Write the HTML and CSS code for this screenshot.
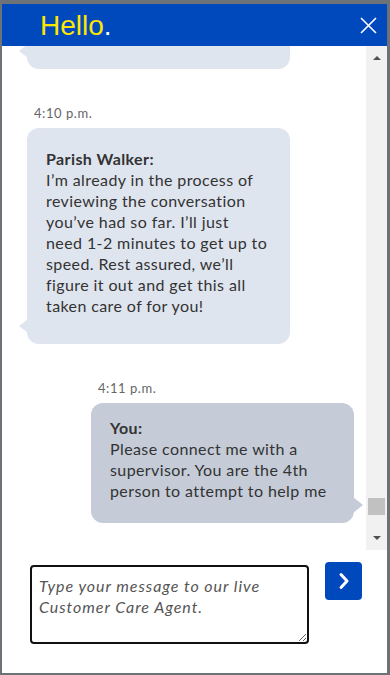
FILE: index.html
```html
<!DOCTYPE html>
<html lang="en">
<head>
<meta charset="utf-8">
<title>Chat</title>
<link rel="stylesheet" href="styles.css">
</head>
<body>
<div class="chat">
  <header class="chat-header">
    <h1 class="title">Hello<span class="dot">.</span></h1>
    <button class="close" aria-label="Close">
      <svg width="17" height="17" viewBox="0 0 17 17"><path d="M1 1L16 16M16 1L1 16" stroke="#fff" stroke-width="1.6" fill="none"/></svg>
    </button>
  </header>
  <div class="chat-body">
    <div class="messages">
      <div class="msg msg-agent msg-first">
        <div class="bubble bubble-agent bubble-short"></div>
      </div>
      <div class="msg msg-agent">
        <div class="time">4:10 p.m.</div>
        <div class="bubble bubble-agent">
          <div class="author">Parish Walker:</div>
          <div class="text">I’m already in the process of<br>reviewing the conversation<br>you’ve had so far. I’ll just<br>need 1-2 minutes to get up to<br>speed. Rest assured, we’ll<br>figure it out and get this all<br>taken care of for you!</div>
        </div>
      </div>
      <div class="msg msg-user">
        <div class="time">4:11 p.m.</div>
        <div class="bubble bubble-user">
          <div class="author">You:</div>
          <div class="text">Please connect me with a<br>supervisor. You are the 4th<br>person to attempt to help me</div>
        </div>
      </div>
    </div>
    <div class="scrollbar">
      <div class="sb-btn"><span class="arrow-up"></span></div>
      <div class="sb-track"><div class="sb-thumb"></div></div>
      <div class="sb-btn"><span class="arrow-down"></span></div>
    </div>
  </div>
  <div class="composer">
    <textarea class="input" placeholder="Type your message to our live Customer Care Agent."></textarea>
    <button class="send" aria-label="Send">
      <svg width="12" height="18" viewBox="0 0 12 18"><path d="M3 2.5L9 9L3 15.5" stroke="#fff" stroke-width="3" fill="none" stroke-linecap="round" stroke-linejoin="round"/></svg>
    </button>
  </div>
</div>
</body>
</html>
```
FILE: styles.css
```css
* { box-sizing: border-box; }
html, body { margin: 0; padding: 0; }
body {
  background: #6d7278;
  width: 390px;
  height: 675px;
  overflow: hidden;
  font-family: "Lato", "Liberation Sans", sans-serif;
}
.chat {
  margin: 4px 3px 2px 2px;
  height: 669px;
  background: #fff;
  display: flex;
  flex-direction: column;
}
.chat-header {
  height: 42px;
  flex: none;
  background: #0049bd;
  display: flex;
  align-items: center;
  justify-content: space-between;
  padding: 0 10px 0 38px;
}
.title {
  margin: 0;
  font-family: "Liberation Sans", Arial, sans-serif;
  font-weight: 400;
  font-size: 28px;
  line-height: 32px;
  color: #ffe500;
  padding-top: 1px;
}
.title .dot { color: #fff; }
.close {
  border: 0;
  background: none;
  padding: 0;
  width: 17px;
  height: 17px;
  display: flex;
  margin-top: 1px;
}
.chat-body {
  height: 504px;
  flex: none;
  display: flex;
}
.messages {
  flex: 1;
  overflow: hidden;
  display: flex;
  flex-direction: column;
  justify-content: flex-end;
  padding: 0 12px 27px 25px;
}
.msg {
  display: flex;
  flex-direction: column;
  margin-top: 36px;
  flex: none;
}
.msg-first { margin-top: 0; }
.msg-agent { align-items: flex-start; }
.msg-user { align-items: flex-end; }
.time {
  font-size: 13px;
  line-height: 16px;
  letter-spacing: 0.55px;
  color: #666;
  padding-left: 7px;
  margin-bottom: 7px;
  width: 263px;
}
.bubble {
  position: relative;
  width: 263px;
  border-radius: 12px;
  font-size: 16px;
  line-height: 21px;
  letter-spacing: 0.4px;
  color: #333;
}
.bubble-agent {
  background: #dfe5ef;
  padding: 20px 19px 28px;
}
.bubble-user {
  background: #c5ccd8;
  padding: 14px 19px 22px;
}
.bubble-short { height: 100px; }
.bubble-agent::before {
  content: "";
  position: absolute;
  left: -8px;
  bottom: 11px;
  border-right: 9px solid #dfe5ef;
  border-top: 7px solid transparent;
  border-bottom: 7px solid transparent;
}
.bubble-user::after {
  content: "";
  position: absolute;
  right: -9px;
  bottom: 10px;
  border-left: 10px solid #c5ccd8;
  border-top: 8px solid transparent;
  border-bottom: 8px solid transparent;
}
.author { font-weight: 700; }
.text { white-space: nowrap; }
.scrollbar {
  width: 21px;
  flex: none;
  background: #f1f1f1;
  display: flex;
  flex-direction: column;
}
.sb-btn {
  height: 24px;
  display: flex;
  align-items: center;
  justify-content: center;
}
.arrow-up {
  width: 0; height: 0;
  border-left: 4px solid transparent;
  border-right: 4px solid transparent;
  border-bottom: 4px solid #505050;
}
.arrow-down {
  width: 0; height: 0;
  border-left: 4px solid transparent;
  border-right: 4px solid transparent;
  border-top: 4px solid #505050;
}
.sb-track {
  flex: 1;
  display: flex;
  flex-direction: column;
  justify-content: flex-end;
  padding: 0 2px 11px;
}
.sb-thumb {
  height: 17px;
  background: #c1c1c1;
}
.composer {
  flex: 1;
  display: flex;
  align-items: flex-start;
  padding: 12px 0 0 28px;
}
.input {
  width: 279px;
  height: 79px;
  margin: 3px 0 0 0;
  border: 2px solid #111;
  border-radius: 4px;
  padding: 8px 7px;
  font-family: "Lato", "Liberation Sans", sans-serif;
  font-style: italic;
  font-size: 16px;
  line-height: 21px;
  letter-spacing: 0.95px;
  color: #333;
  resize: both;
  outline: none;
}
.input::placeholder { color: #555; font-style: italic; }
.send {
  margin-left: 16px;
  width: 37px;
  height: 38px;
  border: 0;
  border-radius: 4px;
  background: #0049bd;
  display: flex;
  align-items: center;
  justify-content: center;
  padding: 0;
}
```
